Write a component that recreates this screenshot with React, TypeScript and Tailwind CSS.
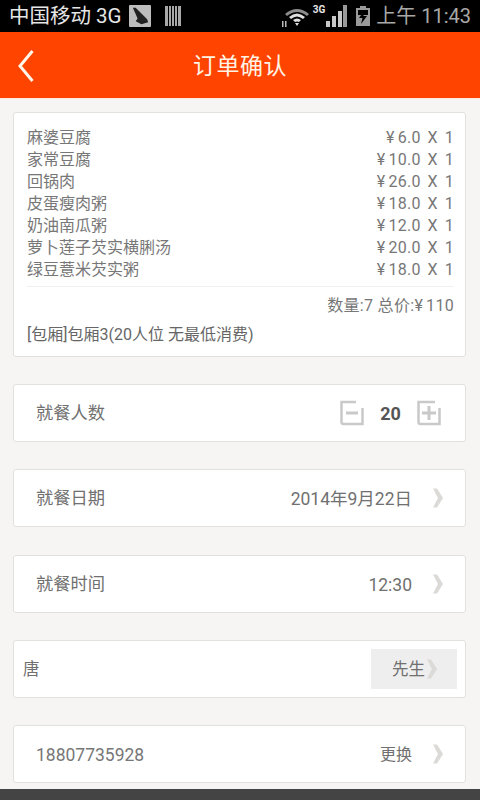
const font = "font-['Roboto','Noto_Sans_CJK_SC',sans-serif]";

const dishes = [
  { name: "麻婆豆腐", price: "6.0" },
  { name: "家常豆腐", price: "10.0" },
  { name: "回锅肉", price: "26.0" },
  { name: "皮蛋瘦肉粥", price: "18.0" },
  { name: "奶油南瓜粥", price: "12.0" },
  { name: "萝卜莲子芡实横脷汤", price: "20.0" },
  { name: "绿豆薏米芡实粥", price: "18.0" },
];

function Yen() {
  return <span className="mr-[3px]">¥</span>;
}

function Chevron({ className = "" }: { className?: string }) {
  return (
    <svg width="12" height="20" viewBox="0 0 12 20" className={className}>
      <path d="M1 0.5 H5 L11 10 L5 19.5 H1 L6 10 Z" fill="#dcdad7" />
    </svg>
  );
}

function StatusBar() {
  return (
    <div className="flex h-8 shrink-0 items-center bg-black pl-[9px] pr-[9px] text-[#e6e6e6]">
      <span className="text-[20.5px] leading-none">中国移动 3G</span>
      <svg width="22" height="22" viewBox="0 0 23 23" className="ml-[7px]">
        <rect width="23" height="23" rx="1" fill="#bdbdbd" />
        <path d="M4 3 L7 3 L19 15 L20 18 L13 20 L7 17 L9 14 Z" fill="#222" />
      </svg>
      <svg width="16" height="20" viewBox="0 0 16 20" className="ml-[14px]">
        <path d="M0 0h3v20H0zM4 0h2v20H4zM7 0h2v20H7zM10 0h2v20h-2zM13 0h3v20h-3z" fill="#a8a8a8" />
      </svg>
      <div className="ml-auto flex items-center">
        <svg width="30" height="22" viewBox="0 0 30 22">
          <path d="M4 9 Q16 -1 28 9 L26 11 Q16 3 6 11 Z" fill="#8c8c8c" />
          <path d="M8 12 Q16 5 24 12 L22 14 Q16 9 10 14 Z" fill="#e0e0e0" />
          <path d="M12 15 Q16 12 20 15 L18 17 Q16 16 14 17 Z" fill="#e0e0e0" />
          <path d="M14 18 L18 18 L16 21 Z" fill="#e0e0e0" />
          <path d="M1 16h1.5v6H1zM4 16h1.5v6H4z" fill="#bbb" />
        </svg>
        <span className="mb-[12px] ml-[2px] text-[10px] font-bold leading-none">3G</span>
        <svg width="22" height="22" viewBox="0 0 22 22">
          <path d="M1 16h4v6H1zM7 11h4v11H7zM13 6h4v16h-4z" fill="#c8c8c8" />
          <path d="M18 0h4v22h-4z" fill="#9a9a9a" />
        </svg>
        <svg width="14" height="20" viewBox="0 0 14 20" className="ml-[9px]">
          <path d="M4 0h6v2h4v18H0V2h4z" fill="#9a9a9a" />
          <path d="M2 4h10v5H2z" fill="#000" />
          <path d="M8 5 L3 12 L6.5 12 L5 18 L11 10 L7.5 10 Z" fill="#000" />
        </svg>
        <span className="ml-[6px] text-[20px] leading-none text-[#a8a8a8]">上午 11:43</span>
      </div>
    </div>
  );
}

function Row({ children, className = "" }: { children: React.ReactNode; className?: string }) {
  return (
    <div
      className={`ml-[13px] flex h-[58px] w-[453px] shrink-0 items-center rounded-[3px] border border-[#e3e1dd] bg-white text-[#707070] ${className}`}
    >
      {children}
    </div>
  );
}

export default function App() {
  return (
    <div className={`${font} flex h-[800px] w-[480px] flex-col overflow-hidden bg-[#f6f5f3]`}>
      <StatusBar />
      <div className="relative flex h-[67px] shrink-0 items-center justify-center border-b border-[#ffe9dd] bg-[#ff4400] pt-[5px]">
        <svg width="18" height="34" viewBox="0 0 18 34" className="absolute left-[17px] top-[17px]">
          <path d="M15.5 2 L3 17 L15.5 32" fill="none" stroke="#fff5e8" strokeWidth="3" />
        </svg>
        <span className="text-[23px] tracking-[0.5px] text-[#fff3e6]">订单确认</span>
      </div>

      <div className="ml-[13px] mt-[13px] h-[245px] w-[453px] shrink-0 rounded-[3px] border border-[#e3e1dd] bg-white pl-[13px] pr-[11px] pt-[14px] text-[16px] text-[#777]">
        <div className="border-b border-[#f1f0ee] pb-[5px]">
          {dishes.map((dish) => (
            <div key={dish.name} className="flex h-[22px] items-center justify-between leading-none">
              <span>{dish.name}</span>
              <span className="tracking-[0.3px] [word-spacing:2.5px]">
                <Yen />
                {dish.price} X 1
              </span>
            </div>
          ))}
        </div>
        <div className="mt-[8px] flex h-[22px] items-center justify-end leading-none tracking-[0.3px]">
          <span>
            数量:7 总价:
            <Yen />
            110
          </span>
        </div>
        <div className="mt-[7px] flex h-[22px] items-center leading-none text-[#666]">[包厢]包厢3(20人位 无最低消费)</div>
      </div>

      <Row className="mt-[27px] pl-[22px] pr-[23px] text-[17.25px]">
        <span className="pt-[2px]">就餐人数</span>
        <svg width="26" height="26" viewBox="0 0 26 26" className="ml-auto">
          <path d="M17 2 H2.5 V22 Q2.5 24 4.5 24 H23.5 V8" fill="none" stroke="#c9c9c9" strokeWidth="2.5" />
          <path d="M7 13 H19" stroke="#c9c9c9" strokeWidth="3" />
        </svg>
        <span className="w-[51px] text-center text-[18px] font-bold text-[#555]">20</span>
        <svg width="26" height="26" viewBox="0 0 26 26">
          <path d="M19 2 H2.5 V22 Q2.5 24 4.5 24 H23.5 V8" fill="none" stroke="#c9c9c9" strokeWidth="2.5" />
          <path d="M6 13 H20 M13 6 V20" stroke="#c9c9c9" strokeWidth="3" />
        </svg>
      </Row>

      <Row className="mt-[27px] pl-[22px] pr-[21px] text-[17.25px]">
        <span className="pt-[2px]">就餐日期</span>
        <span className="ml-auto pt-[2px] text-[17.5px]">2014年9月22日</span>
        <Chevron className="ml-[20px]" />
      </Row>

      <Row className="mt-[28px] pl-[22px] pr-[21px] text-[17.25px]">
        <span className="pt-[2px]">就餐时间</span>
        <span className="ml-auto pt-[2px] text-[17.5px]">12:30</span>
        <Chevron className="ml-[20px]" />
      </Row>

      <Row className="mt-[27px] pl-[9px] pr-[8px] text-[16.5px]">
        <span className="pt-[2px]">唐</span>
        <div className="ml-auto flex h-[40px] w-[86px] items-center bg-[#eeeeee] pl-[21px]">
          <span className="pt-[2px]">先生</span>
          <Chevron className="ml-[1px]" />
        </div>
      </Row>

      <Row className="mt-[27px] pl-[22px] pr-[21px] text-[17.5px]">
        <span className="pt-[2px] text-[#777]">18807735928</span>
        <span className="ml-auto pt-[2px] text-[16px]">更换</span>
        <Chevron className="ml-[20px]" />
      </Row>

      <div className="mt-[6px] h-[11px] shrink-0 bg-[#444444]" />
    </div>
  );
}
